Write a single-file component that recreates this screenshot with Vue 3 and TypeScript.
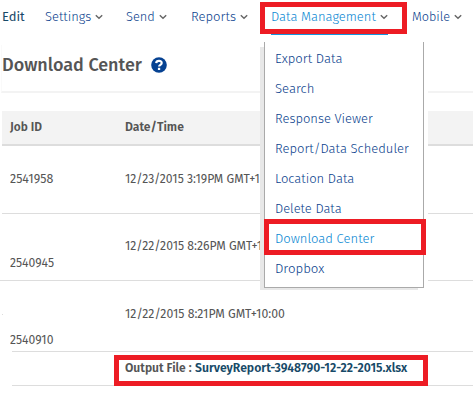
<template>
  <div class="page">
    <nav class="menu">
      <div
        v-for="item in menu"
        :key="item.label"
        class="menu-item"
        :class="{ current: item.label === 'Edit', active: item.active }"
      >
        <span v-fit="item.width" class="text">{{ item.label }}</span>
        <svg v-if="item.label !== 'Edit'" class="chevron" viewBox="0 0 8 6">
          <path d="M0.8 1.2 L4 4.3 L7.2 1.2" />
        </svg>
      </div>
    </nav>

    <header class="title">
      <h1><span v-fit="140" class="text">Download Center</span></h1>
      <svg class="help" viewBox="0 0 16 16">
        <circle cx="8" cy="8" r="7.8" fill="#064292" />
        <path d="M5.2 6.1 C5.4 3.2 10.7 3.1 10.7 6 C10.7 7.9 8.1 7.7 8.1 9.6" fill="none" stroke="#fff" stroke-width="2.2" />
        <rect x="6.9" y="10.8" width="2.3" height="2.2" fill="#fff" />
      </svg>
    </header>

    <section class="jobs">
      <div class="row head">
        <div class="id"><span v-fit="32" class="text">Job ID</span></div>
        <div class="date"><span v-fit="59" class="text">Date/Time</span></div>
      </div>
      <div v-for="job in jobs" :key="job.id" class="row" :class="job.name">
        <div class="id"><span v-fit="job.idWidth" class="text">{{ job.id }}</span></div>
        <div class="date"><span v-fit="job.dateWidth" class="text">{{ job.date }}</span></div>
      </div>
      <div class="output">
        <span v-fit="67" class="text">Output File :</span>
        <a><span v-fit="212.5" class="text">SurveyReport-3948790-12-22-2015.xlsx</span></a>
      </div>
    </section>

    <div class="dropdown-wrap">
      <div class="shadow"></div>
      <ul class="dropdown">
        <li v-for="entry in entries" :key="entry.label" :class="{ selected: entry.selected }">
          <span v-fit="entry.width" class="text">{{ entry.label }}</span>
        </li>
      </ul>
    </div>

    <div class="speck"></div>
    <div class="mark mark-menu"></div>
    <div class="mark mark-entry"></div>
    <div class="mark mark-output"></div>
  </div>
</template>

<script setup lang="ts">
interface Item {
  label: string
  width: number
  active?: boolean
  selected?: boolean
}

const menu: Item[] = [
  { label: 'Edit', width: 23 },
  { label: 'Settings', width: 46 },
  { label: 'Send', width: 28.5 },
  { label: 'Reports', width: 44.5 },
  { label: 'Data Management', width: 105, active: true },
  { label: 'Mobile', width: 38.5 },
]

const entries: Item[] = [
  { label: 'Export Data', width: 67 },
  { label: 'Search', width: 39 },
  { label: 'Response Viewer', width: 98 },
  { label: 'Report/Data Scheduler', width: 134 },
  { label: 'Location Data', width: 79 },
  { label: 'Delete Data', width: 67 },
  { label: 'Download Center', width: 99.5, selected: true },
  { label: 'Dropbox', width: 49 },
]

// the dropdown covers the end of the first two dates
const jobs = [
  { id: '2541958', idWidth: 43, date: '12/23/2015 3:19PM GMT+1', dateWidth: 135, name: 'first' },
  { id: '2540945', idWidth: 44, date: '12/22/2015 8:26PM GMT+1', dateWidth: 137, name: 'second' },
  { id: '2540910', idWidth: 43, date: '12/22/2015 8:21PM GMT+10:00', dateWidth: 159.5, name: 'third' },
]

// spreads or narrows a label to the given width
const vFit = {
  mounted(el: HTMLElement, binding: { value: number }) {
    const natural = el.offsetWidth
    el.style.transform = `scaleX(${binding.value / natural})`
    el.style.marginRight = `${binding.value - natural}px`
  },
}
</script>

<style>
body {
  margin: 0;
  background: #fff;
}
</style>

<style scoped>
.page {
  position: relative;
  width: 473px;
  height: 400px;
  overflow: hidden;
  font-family: "Fira Sans", "Noto Sans", sans-serif;
  font-size: 13px;
  line-height: 20px;
  color: #555;
}
.text {
  display: inline-block;
  white-space: nowrap;
  transform-origin: 0 0;
}
.menu {
  display: flex;
  gap: 23.5px;
  height: 45px;
  padding-left: 2px;
  box-sizing: border-box;
  color: #08408c;
  font-size: 13.5px;
  font-weight: 300;
}
.menu-item {
  display: flex;
  height: 35px;
  padding-top: 7px;
  box-sizing: border-box;
}
.menu-item.current {
  color: #174a68;
  font-weight: 400;
  margin-right: -3.5px;
}
.menu-item.active {
  color: #0586d2;
  border-bottom: 2px solid #1495dd;
}
.chevron {
  width: 8px;
  height: 6px;
  margin: 7px 0 0 4px;
}
.chevron path {
  fill: none;
  stroke: #666;
  stroke-width: 1.4;
}
.title {
  display: flex;
  height: 48px;
  margin-left: 1px;
  box-sizing: border-box;
  border-left: 1px solid #fafafa;
  border-bottom: 2px solid #f3f3f3;
}
h1 {
  margin: 6px 0 0;
  font-size: 19px;
  line-height: 28px;
  font-weight: 500;
}
.help {
  width: 16px;
  height: 16px;
  margin: 12px 0 0 9px;
}
.jobs {
  padding-top: 18px;
}
.row {
  display: flex;
  box-sizing: border-box;
  margin-left: 2px;
  padding-left: 8px;
  border-bottom: 1px solid #ddd;
}
.id {
  width: 115px;
}
.head {
  height: 35px;
  padding-top: 6px;
  background: #f3f3f3;
  border-bottom: 2px solid #ddd;
  font-weight: 600;
}
.first {
  height: 68px;
  padding-top: 23px;
}
.second {
  height: 67px;
  margin-left: 0;
  padding: 22px 0 0 10px;
}
.second .id {
  padding-top: 17px;
}
.third {
  height: 71px;
  margin-left: 12px;
  padding: 23px 0 0;
}
.third .id {
  margin-left: -2px;
  padding-top: 26px;
}
.output {
  display: flex;
  gap: 3px;
  height: 34px;
  margin-left: 12px;
  padding: 6px 0 0 113px;
  box-sizing: border-box;
  border-bottom: 1px solid #ddd;
  font-weight: 600;
}
.output a {
  color: #174a68;
}
.dropdown-wrap {
  position: absolute;
  left: 260px;
  top: 42px;
  width: 168px;
  height: 248px;
  background: #fff;
}
.shadow {
  position: absolute;
  left: 0;
  top: 5px;
  width: 158px;
  height: 243px;
  background: #e8e8e8;
}
.dropdown {
  position: relative;
  width: 160px;
  height: 246px;
  margin: 0 0 0 4px;
  padding: 2px 0 0 10px;
  box-sizing: border-box;
  list-style: none;
  background: #fff;
  border: 1px solid #aaa;
  border-top: 0;
  color: #08408c;
  font-size: 13.5px;
  font-weight: 300;
}
.dropdown li {
  height: 30px;
  line-height: 30px;
}
.dropdown .selected {
  color: #0586d2;
}
.speck {
  position: absolute;
  left: 2px;
  top: 314px;
  width: 1px;
  height: 1px;
  background: #ddd;
}
.mark {
  position: absolute;
  box-sizing: border-box;
  border: 5px solid #ed1c24;
}
.mark-menu {
  left: 260px;
  top: 2px;
  width: 147px;
  height: 32px;
}
.mark-entry {
  left: 264px;
  top: 219px;
  width: 162px;
  height: 36px;
}
.mark-output {
  left: 114px;
  top: 355px;
  width: 314px;
  height: 31px;
}
</style>
